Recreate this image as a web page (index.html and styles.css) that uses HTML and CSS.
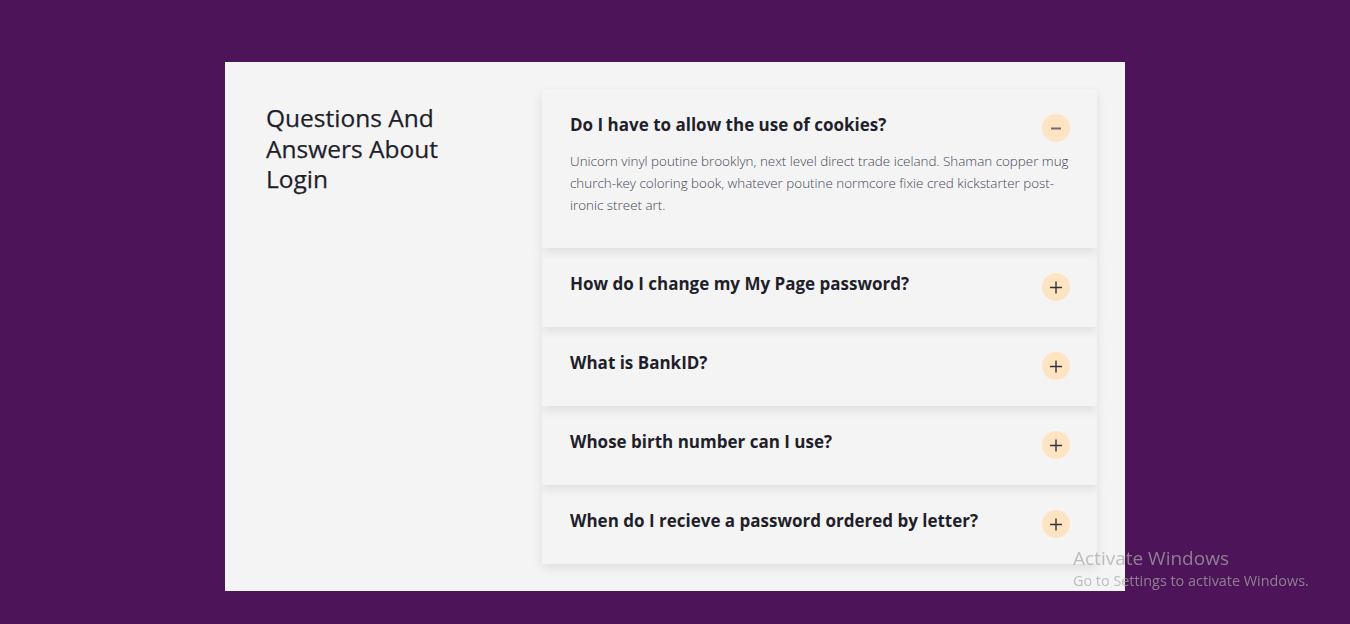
FILE: index.html
```html
<!DOCTYPE html>
<html lang="en">
<head>
<meta charset="utf-8">
<title>FAQ</title>
<link rel="stylesheet" href="styles.css">
</head>
<body>
<main class="card">
  <div class="intro">
    <h1 class="title">Questions And Answers About Login</h1>
  </div>
  <div class="accordion">
    <div class="item open">
      <div class="item-head">
        <h3 class="question">Do I have to allow the use of cookies?</h3>
        <span class="toggle"><svg width="28" height="28" viewBox="0 0 28 28"><line x1="9" y1="14.5" x2="19" y2="14.5" stroke="#7a6a5c" stroke-width="2"/></svg></span>
      </div>
      <p class="answer">Unicorn vinyl poutine brooklyn, next level direct trade iceland. Shaman copper mug church-key coloring book, whatever poutine normcore fixie cred kickstarter post-ironic street art.</p>
    </div>
    <div class="item">
      <div class="item-head">
        <h3 class="question">How do I change my My Page password?</h3>
        <span class="toggle"><svg width="28" height="28" viewBox="0 0 28 28"><path d="M8 14.5h12M14 8.5v12" stroke="#333" stroke-width="1.4"/></svg></span>
      </div>
    </div>
    <div class="item">
      <div class="item-head">
        <h3 class="question">What is BankID?</h3>
        <span class="toggle"><svg width="28" height="28" viewBox="0 0 28 28"><path d="M8 14.5h12M14 8.5v12" stroke="#333" stroke-width="1.4"/></svg></span>
      </div>
    </div>
    <div class="item">
      <div class="item-head">
        <h3 class="question">Whose birth number can I use?</h3>
        <span class="toggle"><svg width="28" height="28" viewBox="0 0 28 28"><path d="M8 14.5h12M14 8.5v12" stroke="#333" stroke-width="1.4"/></svg></span>
      </div>
    </div>
    <div class="item">
      <div class="item-head">
        <h3 class="question">When do I recieve a password ordered by letter?</h3>
        <span class="toggle"><svg width="28" height="28" viewBox="0 0 28 28"><path d="M8 14.5h12M14 8.5v12" stroke="#333" stroke-width="1.4"/></svg></span>
      </div>
    </div>
  </div>
</main>
<div class="watermark">
  <div class="wm-title">Activate Windows</div>
  <div class="wm-sub">Go to Settings to activate Windows.</div>
</div>
</body>
</html>
```

FILE: styles.css
```css
* { box-sizing: border-box; }

html, body {
  margin: 0;
  padding: 0;
}

body {
  background: #4d1459;
  font-family: "Open Sans", "Noto Sans", sans-serif;
  color: #1f1f2b;
  min-height: 624px;
  padding-top: 62px;
}

.card {
  width: 900px;
  height: 529px;
  margin: 0 auto;
  background: #f4f4f4;
  display: flex;
  padding: 27px 28px 28px 41px;
}

.intro {
  width: 276px;
  flex: none;
}

.title {
  margin: 14px 0 0;
  font-size: 24.5px;
  font-weight: 400;
  line-height: 30.5px;
  width: 200px;
  color: #1f1f2b;
  -webkit-text-stroke: 0.25px #1f1f2b;
}

.accordion {
  width: 555px;
  flex: none;
  display: flex;
  flex-direction: column;
}

.item {
  background: #f4f4f4;
  padding: 24px 27px 26px 28px;
  box-shadow: 0 4px 10px rgba(0, 0, 0, 0.09);
  position: relative;
}

.item:nth-child(1) { z-index: 5; }
.item:nth-child(2) { z-index: 4; }
.item:nth-child(3) { z-index: 3; }
.item:nth-child(4) { z-index: 2; }
.item:nth-child(5) { z-index: 1; }

.item.open {
  padding-bottom: 32px;
}

.item-head {
  display: flex;
  justify-content: space-between;
  align-items: flex-start;
}

.question {
  margin: -2px 0 0;
  font-size: 17px;
  font-weight: 700;
  line-height: 27px;
  color: #1f1f2b;
}

.toggle {
  width: 28px;
  height: 28px;
  border-radius: 50%;
  background: #ffe4c4;
  flex: none;
  margin-top: 1px;
  display: flex;
}

.answer {
  margin: 8px 0 0;
  font-size: 13.4px;
  font-weight: 300;
  line-height: 22px;
  color: #454556;
  width: 502px;
}

.watermark {
  position: fixed;
  left: 1073px;
  top: 546px;
  z-index: 10;
  color: rgba(167, 167, 167, 0.72);
  font-family: "Open Sans", "Noto Sans", sans-serif;
  pointer-events: none;
}

.wm-title {
  font-size: 19px;
  line-height: 25px;
}

.wm-sub {
  font-size: 14.4px;
  line-height: 20px;
}
```
